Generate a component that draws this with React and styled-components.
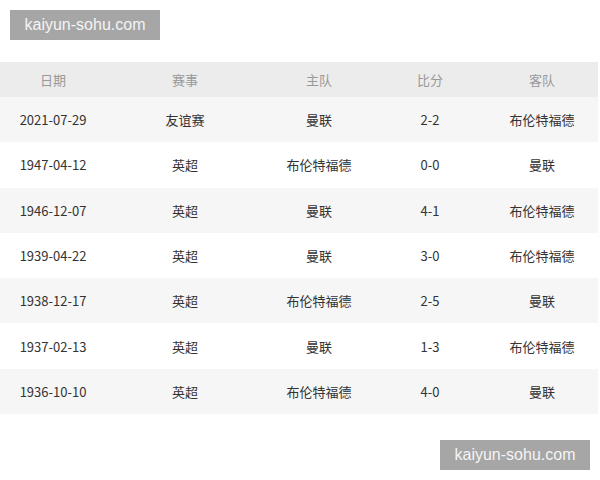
import React from "react";
import styled, { createGlobalStyle } from "styled-components";

const GlobalStyle = createGlobalStyle`
  html, body {
    margin: 0;
    padding: 0;
    background: #ffffff;
    font-family: "Microsoft YaHei", "Noto Sans CJK SC", "Liberation Sans", sans-serif;
  }
`;

const Page = styled.div`
  position: relative;
  width: 600px;
  height: 480px;
  padding-top: 62px;
  box-sizing: border-box;
  overflow: hidden;
`;

const Watermark = styled.div`
  position: absolute;
  ${(p) => (p.$bottom ? "left: 440px; top: 440px;" : "left: 10px; top: 10px;")}
  width: 150px;
  height: 30px;
  display: flex;
  align-items: center;
  justify-content: center;
  background: #a6a6a6;
  color: #f4f4f4;
  font-family: "Liberation Sans", Arial, sans-serif;
  font-size: 16px;
`;

const Table = styled.div`
  width: 598px;
  display: flex;
  flex-direction: column;
`;

const Row = styled.div`
  display: grid;
  grid-template-columns: 106px 158px 110px 112px 112px;
  align-items: center;
  height: ${(p) => (p.$head ? "35px" : "45.3px")};
  background: ${(p) => (p.$head ? "#ececec" : p.$odd ? "#f6f6f6" : "#ffffff")};
  color: ${(p) => (p.$head ? "#999999" : "#333333")};
  font-size: 13px;
`;

const Cell = styled.div`
  text-align: center;
  white-space: nowrap;
`;

const head = ["日期", "赛事", "主队", "比分", "客队"];

const rows = [
  ["2021-07-29", "友谊赛", "曼联", "2-2", "布伦特福德"],
  ["1947-04-12", "英超", "布伦特福德", "0-0", "曼联"],
  ["1946-12-07", "英超", "曼联", "4-1", "布伦特福德"],
  ["1939-04-22", "英超", "曼联", "3-0", "布伦特福德"],
  ["1938-12-17", "英超", "布伦特福德", "2-5", "曼联"],
  ["1937-02-13", "英超", "曼联", "1-3", "布伦特福德"],
  ["1936-10-10", "英超", "布伦特福德", "4-0", "曼联"],
];

export default function App() {
  return (
    <Page>
      <GlobalStyle />
      <Table>
        <Row $head>
          {head.map((h) => (
            <Cell key={h}>{h}</Cell>
          ))}
        </Row>
        {rows.map((r, i) => (
          <Row key={r[0]} $odd={i % 2 === 0}>
            {r.map((c, j) => (
              <Cell key={j}>{c}</Cell>
            ))}
          </Row>
        ))}
      </Table>
      <Watermark>kaiyun-sohu.com</Watermark>
      <Watermark $bottom>kaiyun-sohu.com</Watermark>
    </Page>
  );
}
